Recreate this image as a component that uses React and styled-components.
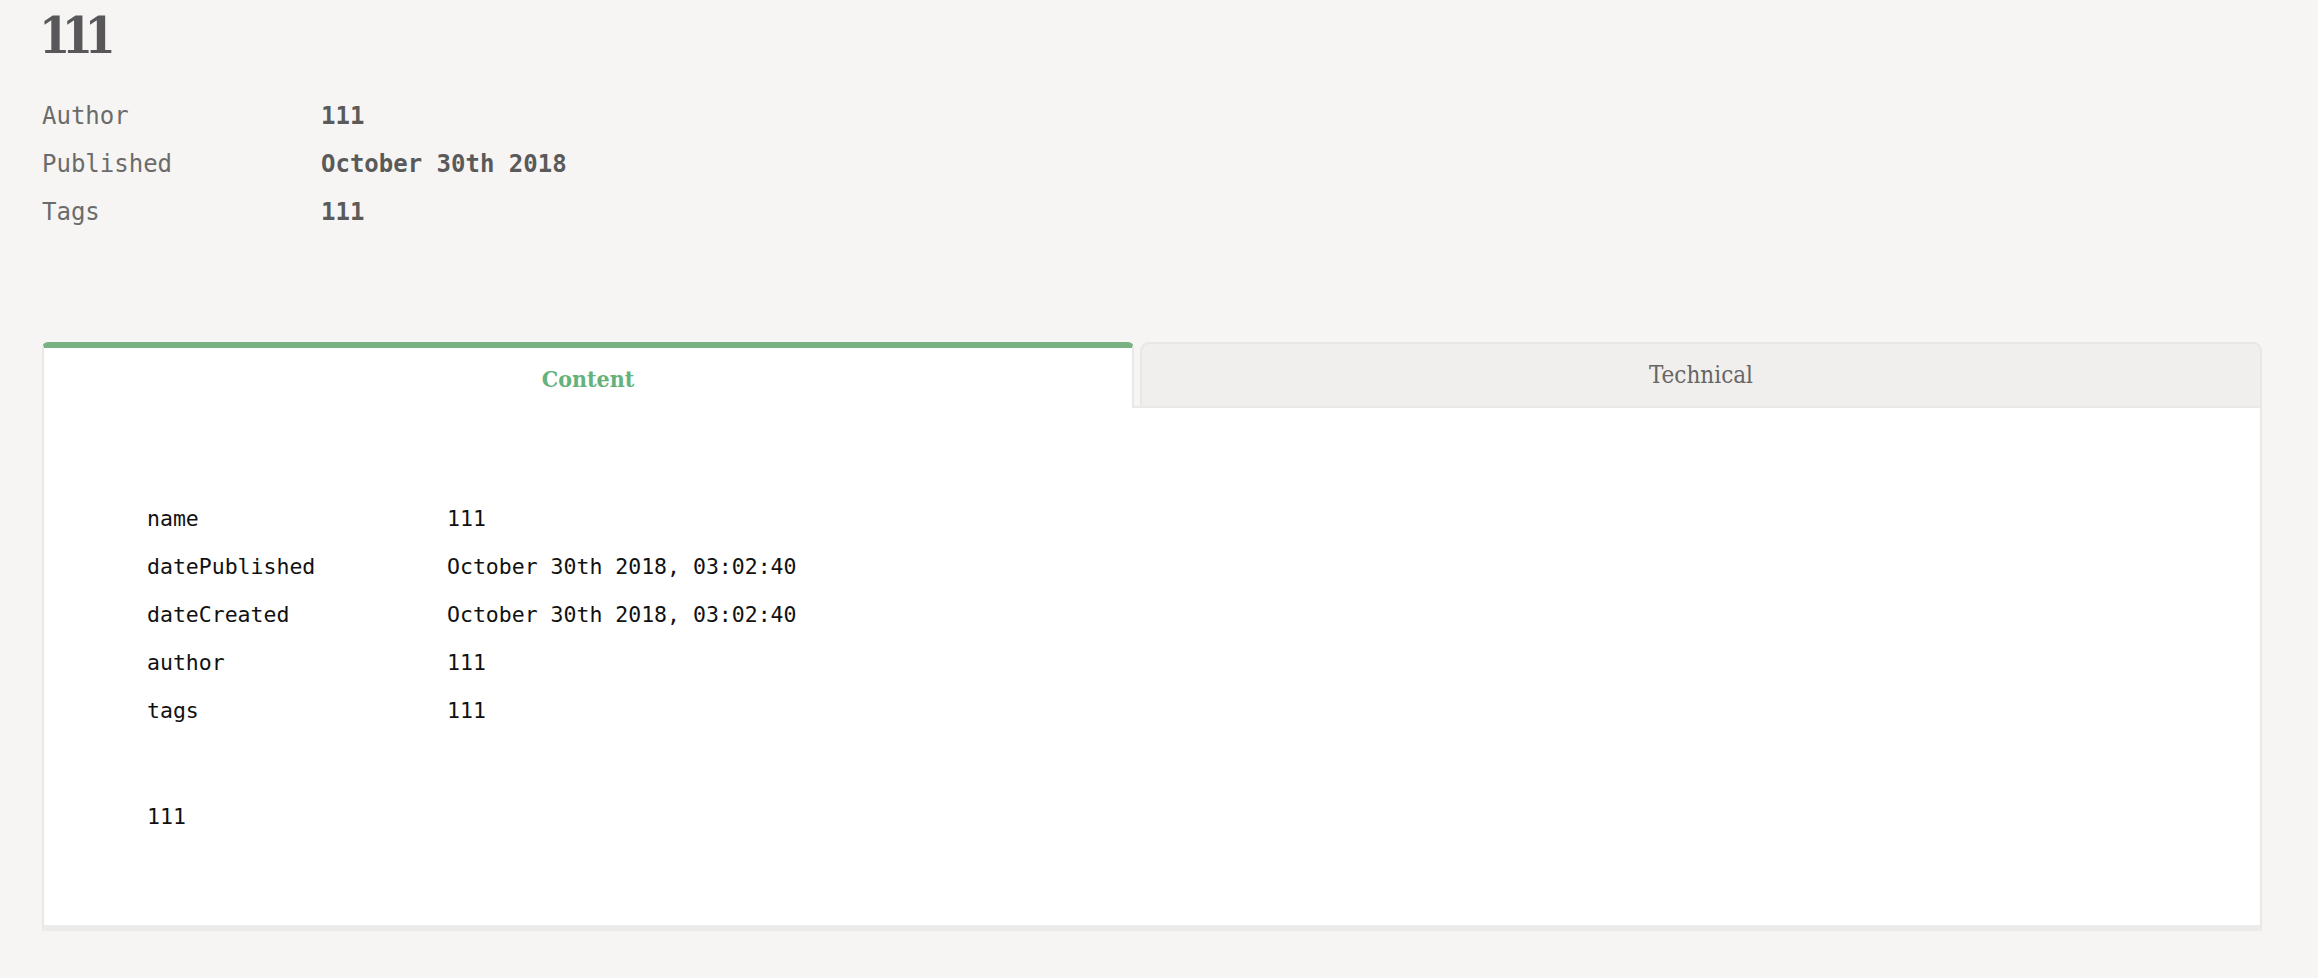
import React, { useState } from 'react';
import styled, { createGlobalStyle } from 'styled-components';

const GlobalStyle = createGlobalStyle`
  html, body {
    margin: 0;
    padding: 0;
    background: #f6f5f3;
  }
`;

const Page = styled.div`
  padding: 0 56px 46px 42px;
  font-family: "DejaVu Sans Mono", "Liberation Mono", monospace;
`;

const Title = styled.h1`
  margin: 0 0 0 -3px;
  padding-top: 10px;
  font-family: "DejaVu Serif Condensed", "DejaVu Serif", serif;
  font-weight: bold;
  font-size: 50px;
  line-height: 52px;
  letter-spacing: -8.5px;
  color: #58585a;
`;

const Meta = styled.dl`
  display: grid;
  grid-template-columns: 279px auto;
  grid-auto-rows: 48px;
  align-items: center;
  margin: 30px 0 0;
  font-size: 24px;
`;

const MetaLabel = styled.dt`
  margin: 0;
  color: #6b6b6b;
`;

const MetaValue = styled.dd`
  margin: 0;
  font-weight: bold;
  color: #5a5a5a;
`;

const Tabs = styled.div`
  margin-top: 106px;
`;

const TabList = styled.div`
  display: grid;
  grid-template-columns: 1092px 1fr;
  gap: 6px;
  align-items: end;
  border-bottom: 2px solid #e8e8e6;
`;

const Tab = styled.button`
  box-sizing: border-box;
  height: ${p => (p.$active ? '66px' : '64px')};
  margin-bottom: ${p => (p.$active ? '-2px' : '0')};
  padding: 0;
  background: ${p => (p.$active ? '#fff' : '#f0efed')};
  border: 2px solid ${p => (p.$active ? '#e8e8e8' : '#e8e7e5')};
  border-top: ${p => (p.$active ? '6px solid #78b283' : '2px solid #e8e7e5')};
  border-bottom: none;
  border-radius: ${p => (p.$active ? '6px 6px 0 0' : '9px 9px 0 0')};
  font-family: "DejaVu Serif Condensed", "DejaVu Serif", serif;
  font-size: ${p => (p.$active ? '23px' : '24px')};
  font-weight: ${p => (p.$active ? 'bold' : 'normal')};
  color: ${p => (p.$active ? '#65b27d' : '#666')};
  cursor: pointer;
`;

const Panel = styled.div`
  background: #fff;
  border: 2px solid #e8e8e8;
  border-top: none;
  border-bottom: 6px solid #ebebeb;
  padding: 86px 60px 84px 103px;
  font-size: 21.5px;
  color: #111;
`;

const Fields = styled.div`
  display: grid;
  grid-template-columns: 300px auto;
  grid-auto-rows: 48px;
  align-items: center;
`;

const Body = styled.p`
  margin: 59px 0 0;
  line-height: 48px;
`;

const meta = [
  ['Author', '111'],
  ['Published', 'October 30th 2018'],
  ['Tags', '111'],
];

const fields = [
  ['name', '111'],
  ['datePublished', 'October 30th 2018, 03:02:40'],
  ['dateCreated', 'October 30th 2018, 03:02:40'],
  ['author', '111'],
  ['tags', '111'],
];

const App = () => {
  const [tab, setTab] = useState('content');

  return (
    <>
      <GlobalStyle />
      <Page>
        <Title>111</Title>
        <Meta>
          {meta.map(([label, value]) => (
            <React.Fragment key={label}>
              <MetaLabel>{label}</MetaLabel>
              <MetaValue>{value}</MetaValue>
            </React.Fragment>
          ))}
        </Meta>
        <Tabs>
          <TabList>
            <Tab $active={tab === 'content'} onClick={() => setTab('content')}>
              Content
            </Tab>
            <Tab $active={tab === 'technical'} onClick={() => setTab('technical')}>
              Technical
            </Tab>
          </TabList>
          <Panel>
            <Fields>
              {fields.map(([key, value]) => (
                <React.Fragment key={key}>
                  <span>{key}</span>
                  <span>{value}</span>
                </React.Fragment>
              ))}
            </Fields>
            <Body>111</Body>
          </Panel>
        </Tabs>
      </Page>
    </>
  );
};

export default App;
